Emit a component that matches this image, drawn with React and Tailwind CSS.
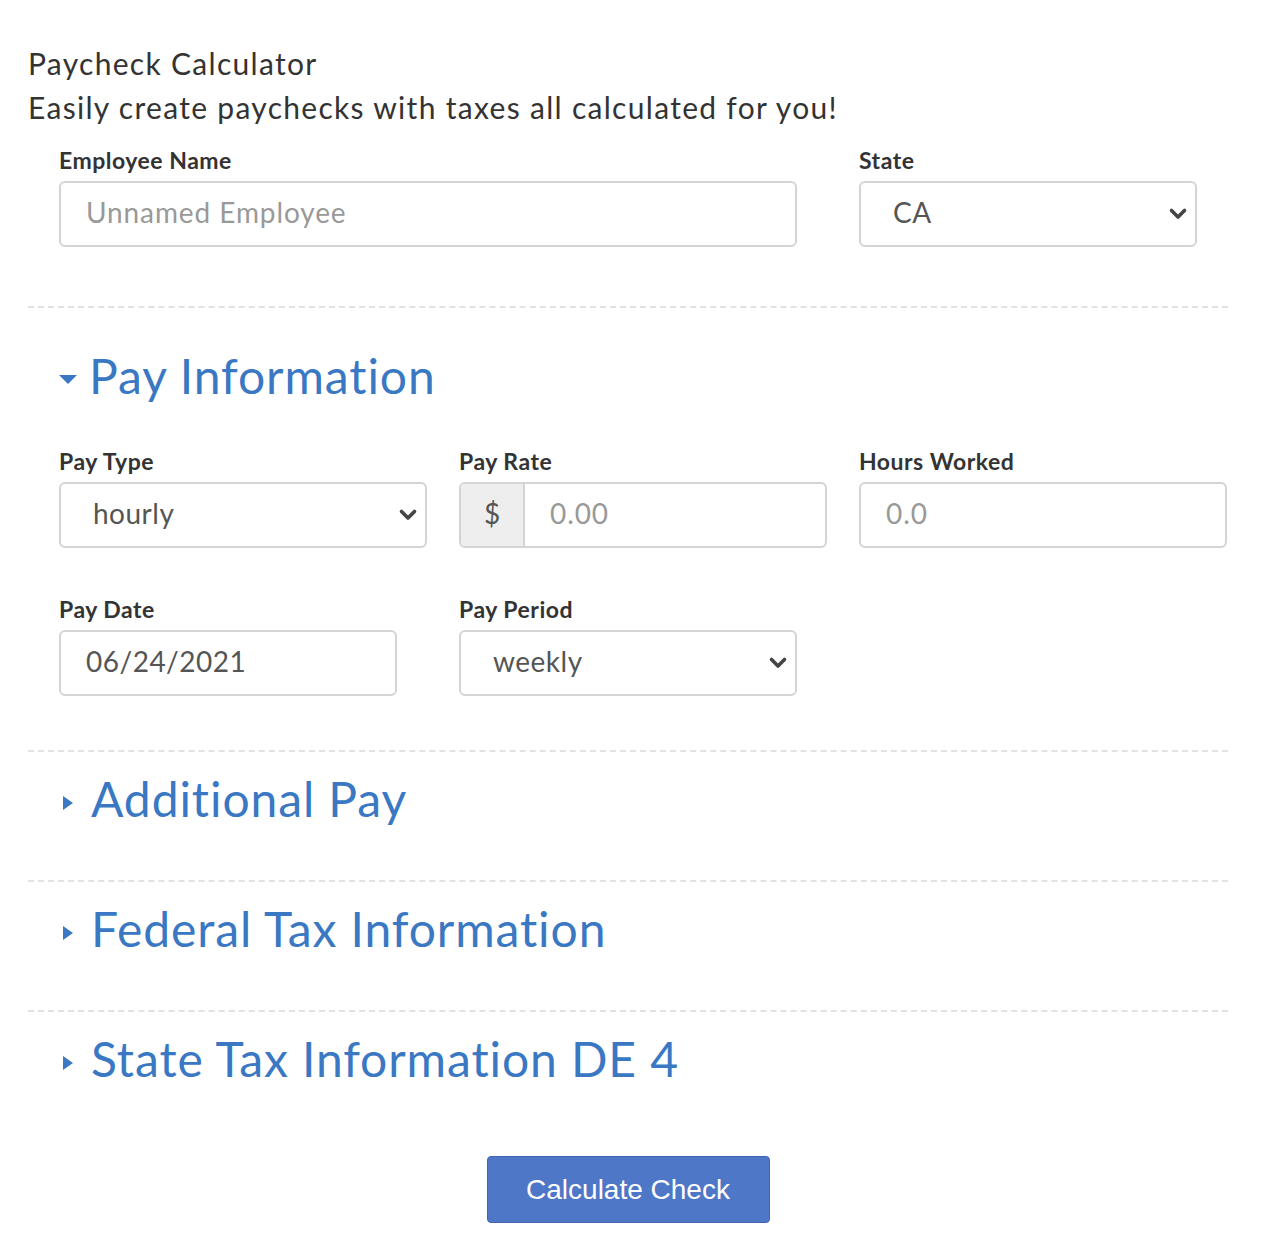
import { useState } from 'react'

const SECTIONS = ['Additional Pay', 'Federal Tax Information', 'State Tax Information DE 4']

function Chevron() {
  return (
    <svg width="20" height="14" viewBox="0 0 20 14" className="shrink-0">
      <path d="M3.5 3.5 L10 10 L16.5 3.5" fill="none" stroke="#444" strokeWidth="3.6" strokeLinecap="round" strokeLinejoin="round" />
    </svg>
  )
}

function Label({ children }) {
  return <div className="text-[23px] leading-[24px] font-bold tracking-[0.5px] text-[#333] mb-[9px]">{children}</div>
}

function Select({ value, options, width }) {
  return (
    <div className={`${width} h-[66px] flex items-center border-2 border-[#d4d4d4] rounded-[6px] bg-white pr-[7px]`}>
      <select
        defaultValue={value}
        className="flex-1 appearance-none bg-transparent outline-none pl-[32px] pb-[4px] text-[28px] tracking-[0.5px] text-[#555]"
      >
        {options.map(o => <option key={o}>{o}</option>)}
      </select>
      <Chevron />
    </div>
  )
}

function TextInput({ placeholder, value, width }) {
  return (
    <input
      defaultValue={value}
      placeholder={placeholder}
      className={`${width} h-[66px] border-2 border-[#d4d4d4] rounded-[6px] bg-white pl-[25px] pb-[4px] text-[28px] tracking-[0.5px] text-[#555] placeholder:text-[#999] placeholder:tracking-[0.9px] outline-none`}
    />
  )
}

function Caret({ open }) {
  return open ? (
    <svg width="18" height="9" viewBox="0 0 18 9" className="shrink-0 mt-[6px] mr-[12px]">
      <path d="M0 0 H18 L9 9 Z" fill="#3a78c3" />
    </svg>
  ) : (
    <svg width="10" height="14" viewBox="0 0 10 14" className="shrink-0 mt-[8px] ml-[4px] mr-[18px]">
      <path d="M0 0 L10 7 L0 14 Z" fill="#3a78c3" />
    </svg>
  )
}

function Divider() {
  return <div className="border-t-2 border-dashed border-[#e2e2e2]" />
}

export default function App() {
  const [payType] = useState('hourly')

  return (
    <div className="min-h-[1252px] bg-white font-['Lato','Open_Sans',sans-serif] text-[#333]">
      <div className="w-[1200px] ml-[28px] pt-[41px]">
        <div className="text-[30px] leading-[44px] tracking-[1.3px] text-[#333]">Paycheck Calculator</div>
        <div className="text-[30px] leading-[44px] tracking-[1.3px] text-[#333]">Easily create paychecks with taxes all calculated for you!</div>

        {/* Employee row */}
        <div className="flex pl-[31px] mt-[19px]">
          <div className="w-[738px]">
            <Label>Employee Name</Label>
            <TextInput placeholder="Unnamed Employee" width="w-[738px]" />
          </div>
          <div className="w-[338px] ml-[62px]">
            <Label>State</Label>
            <Select value="CA" options={['CA', 'NY', 'TX', 'WA']} width="w-[338px]" />
          </div>
        </div>

        <div className="mt-[59px]">
          <Divider />
        </div>

        {/* Pay Information */}
        <div className="pl-[31px] mt-[38px] flex items-center h-[60px]">
          <Caret open />
          <h2 className="text-[48px] leading-[60px] tracking-[0.9px] text-[#3a78c3]">Pay Information</h2>
        </div>

        <div className="pl-[31px] mt-[43px] grid grid-cols-[368px_368px_368px] gap-x-[32px]">
          <div>
            <Label>Pay Type</Label>
            <Select value={payType} options={['hourly', 'salary']} width="w-[368px]" />
          </div>
          <div>
            <Label>Pay Rate</Label>
            <div className="flex h-[66px] border-2 border-[#d4d4d4] rounded-[6px] overflow-hidden">
              <div className="w-[64px] bg-[#eee] border-r-2 border-[#d4d4d4] flex items-center justify-center pb-[4px] text-[28px] text-[#555]">$</div>
              <input placeholder="0.00" className="flex-1 min-w-0 pl-[25px] pb-[4px] text-[28px] text-[#555] placeholder:text-[#999] placeholder:tracking-[0.9px] outline-none" />
            </div>
          </div>
          <div>
            <Label>Hours Worked</Label>
            <TextInput placeholder="0.0" width="w-[368px]" />
          </div>
        </div>

        <div className="pl-[31px] mt-[49px] flex gap-[62px]">
          <div>
            <Label>Pay Date</Label>
            <TextInput value="06/24/2021" width="w-[338px]" />
          </div>
          <div>
            <Label>Pay Period</Label>
            <Select value="weekly" options={['weekly', 'biweekly', 'monthly']} width="w-[338px]" />
          </div>
        </div>

        <div className="mt-[54px]">
          <Divider />
        </div>

        {SECTIONS.map((title, i) => (
          <div key={title}>
            <div className="pl-[31px] mt-[17px] flex items-center h-[60px]">
              <Caret />
              <h2 className="text-[48px] leading-[60px] tracking-[0.9px] text-[#3a78c3]">{title}</h2>
            </div>
            {i < SECTIONS.length - 1 && (
              <div className="mt-[51px]">
                <Divider />
              </div>
            )}
          </div>
        ))}

        <div className="flex justify-center mt-[67px]">
          <button className="w-[283px] h-[67px] bg-[#4f77c8] border border-[#4264b0] rounded-[4px] text-white text-[28px] font-['Liberation_Sans',Arial,sans-serif]">
            Calculate Check
          </button>
        </div>
      </div>
    </div>
  )
}
